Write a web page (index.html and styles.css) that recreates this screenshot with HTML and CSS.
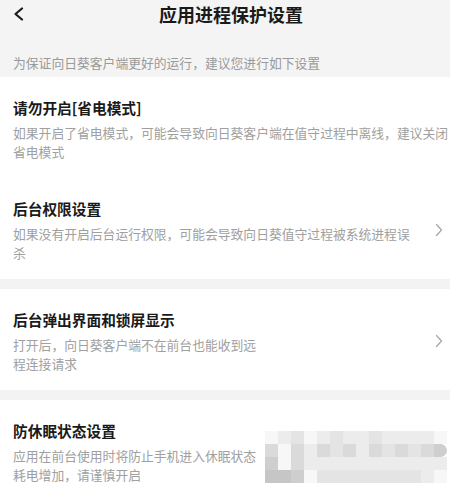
FILE: index.html
```html
<!DOCTYPE html>
<html lang="zh-CN">
<head>
    <meta charset="UTF-8">
    <meta name="viewport" content="width=device-width, initial-scale=1.0">
    <title>应用进程保护设置</title>
    <link rel="stylesheet" href="styles.css">
</head>
<body>
    <div class="header">
        <div class="topbar">
            <svg class="back" width="12" height="14" viewBox="0 0 12 14">
                <path d="M10 1.5 L3.5 7 L10 12.5" fill="none" stroke="#1a1a1a" stroke-width="2.2" stroke-linecap="round" stroke-linejoin="round"/>
            </svg>
            <h1 class="title">应用进程保护设置</h1>
        </div>
        <p class="intro">为保证向日葵客户端更好的运行，建议您进行如下设置</p>
    </div>

    <div class="group">
        <div class="item full">
            <div class="item-text">
                <h2>请勿开启[省电模式]</h2>
                <p>如果开启了省电模式，可能会导致向日葵客户端在值守过程中离线，建议关闭省电模式</p>
            </div>
        </div>
        <div class="item">
            <div class="item-text">
                <h2>后台权限设置</h2>
                <p>如果没有开启后台运行权限，可能会导致向日葵值守过程被系统进程误杀</p>
            </div>
            <svg class="arrow" width="8" height="14" viewBox="0 0 8 14">
                <path d="M1.5 1.5 L6.5 7 L1.5 12.5" fill="none" stroke="#a8a8a8" stroke-width="1.3" stroke-linecap="round" stroke-linejoin="round"/>
            </svg>
        </div>
    </div>

    <div class="group">
        <div class="item">
            <div class="item-text">
                <h2>后台弹出界面和锁屏显示</h2>
                <p class="narrow">打开后，向日葵客户端不在前台也能收到远程连接请求</p>
            </div>
            <svg class="arrow" width="8" height="14" viewBox="0 0 8 14">
                <path d="M1.5 1.5 L6.5 7 L1.5 12.5" fill="none" stroke="#a8a8a8" stroke-width="1.3" stroke-linecap="round" stroke-linejoin="round"/>
            </svg>
        </div>
    </div>

    <div class="group">
        <div class="item">
            <div class="item-text">
                <h2>防休眠状态设置</h2>
                <p class="narrow">应用在前台使用时将防止手机进入休眠状态耗电增加，请谨慎开启</p>
            </div>
            <!-- pixelated switch -->
            <div class="mosaic">
                <i class="a"></i><i class="b"></i><i class="c"></i><i class="a"></i><i class="b"></i><i class="c"></i><i class="b"></i><i class="b"></i><i class="c"></i><i class="b"></i><i class="b"></i><i class="b"></i><i class="b"></i><i class="a"></i>
                <i class="d"></i><i class="a"></i><i class="d"></i><i class="b"></i><i class="d"></i><i class="c"></i><i class="d"></i><i class="b"></i><i class="d"></i><i class="c"></i><i class="d"></i><i class="c"></i><i class="d"></i><i class="e end"></i>
                <i class="e"></i><i class="a"></i><i class="d"></i><i class="b"></i><i class="b"></i><i class="b"></i><i class="b"></i><i class="b"></i><i class="b"></i><i class="b"></i><i class="b"></i><i class="b"></i><i class="b"></i><i class="b"></i>
                <i class="f"></i><i class="f"></i><i class="e"></i><i class="a"></i><i class="c"></i><i class="c"></i><i class="c"></i><i class="c"></i><i class="c"></i><i class="c"></i><i class="c"></i><i class="c"></i><i class="b"></i><i class="a"></i>
            </div>
        </div>
    </div>
</body>
</html>
```

FILE: styles.css
```css
body {
    margin: 0;
    background-color: #f3f3f3;
    font-family: "Noto Sans CJK SC", "Noto Sans", sans-serif;
    color: #1a1a1a;
}

.header {
    background-color: #f4f4f4;
    height: 77px;
}

.topbar {
    display: flex;
    align-items: center;
    height: 28px;
    padding: 0 12px;
}

.back {
    flex: none;
}

.title {
    flex: 1;
    margin: 0;
    text-align: center;
    font-size: 18px;
    font-weight: 700;
    line-height: 28px;
}

.intro {
    margin: 0;
    padding: 26px 13px 0;
    font-size: 12.8px;
    line-height: 18px;
    color: #9a9a9a;
}

.group {
    background: #ffffff;
    margin-bottom: 10px;
}

.item {
    display: flex;
    align-items: center;
    padding: 20px 6px 17px 13px;
}

.item-text {
    flex: 1;
    max-width: 402px;
}

.item.full {
    padding-right: 0;
}

.item.full .item-text {
    max-width: none;
}

.item h2 {
    margin: 0;
    font-size: 14.7px;
    font-weight: 700;
    line-height: 22px;
    color: #1a1a1a;
}

.item p {
    margin: 4px 0 0;
    font-size: 12.8px;
    line-height: 19px;
    color: #a0a0a0;
}

.item p.narrow {
    max-width: 250px;
}

.arrow {
    flex: none;
    margin-left: auto;
    margin-right: 1px;
}

.mosaic {
    display: grid;
    grid-template-columns: repeat(14, 13px);
    grid-auto-rows: 13px;
    margin: 10px -3px 0 auto;
}

.mosaic i { display: block; }
.mosaic .a { background: #f7f7f7; }
.mosaic .b { background: #ececec; }
.mosaic .c { background: #e4e4e4; }
.mosaic .d { background: #dadada; }
.mosaic .e { background: #cecece; }
.mosaic .f { background: #c6c6c6; }
.mosaic .end { border-radius: 0 7px 7px 0; }
```
